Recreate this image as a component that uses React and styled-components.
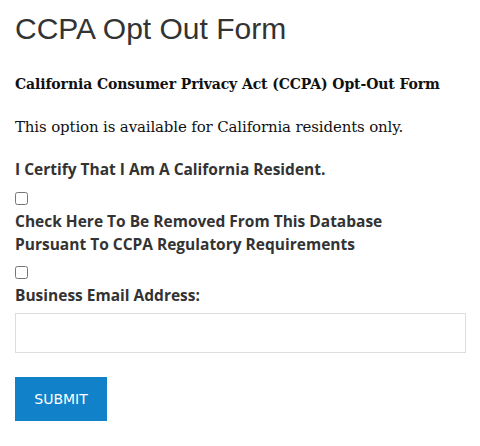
import React from "react";
import styled, { createGlobalStyle } from "styled-components";

const GlobalStyle = createGlobalStyle`
  html, body {
    margin: 0;
    padding: 0;
    background: #fff;
  }
`;

const Page = styled.div`
  padding: 11px 14px 20px 15px;
  display: flex;
  flex-direction: column;
  color: #222;
`;

const Title = styled.h1`
  margin: 0;
  font-family: "Liberation Sans", Arial, sans-serif;
  font-weight: 400;
  font-size: 30px;
  line-height: 36px;
  color: #333;
`;

const SubTitle = styled.h2`
  margin: 27px 0 0;
  font-family: "DejaVu Serif", "Liberation Serif", serif;
  font-weight: 700;
  font-size: 14px;
  line-height: 20px;
  color: #111;
  letter-spacing: -0.1px;
`;

const Note = styled.p`
  margin: 22px 0 0;
  font-family: "DejaVu Serif", "Liberation Serif", serif;
  font-size: 15px;
  line-height: 22px;
  color: #111;
  letter-spacing: -0.15px;
`;

const Label = styled.label`
  display: block;
  margin-top: ${(p) => p.$top || 0}px;
  font-family: "Open Sans", "Noto Sans", sans-serif;
  font-weight: 700;
  font-size: 15.5px;
  line-height: 23px;
  color: #333;
`;

const Check = styled.input.attrs({ type: "checkbox" })`
  margin: ${(p) => p.$top}px 0 ${(p) => p.$bottom}px;
  width: 13px;
  height: 13px;
`;

const EmailInput = styled.input.attrs({ type: "email" })`
  box-sizing: border-box;
  margin-top: 6px;
  width: 100%;
  height: 40px;
  border: 1px solid #ddd;
  background: #fff;
  outline: none;
`;

const SubmitButton = styled.button`
  margin-top: 24px;
  align-self: flex-start;
  width: 92px;
  height: 44px;
  border: none;
  background: #1181c9;
  color: #fff;
  font-family: "DejaVu Sans", Verdana, sans-serif;
  font-size: 14px;
  cursor: pointer;
`;

export default function App() {
  return (
    <>
      <GlobalStyle />
      <Page>
        <Title>CCPA Opt Out Form</Title>
        <SubTitle>California Consumer Privacy Act (CCPA) Opt-Out Form</SubTitle>
        <Note>This option is available for California residents only.</Note>
        <Label $top={20}>I Certify That I Am A California Resident.</Label>
        <Check $top={11} $bottom={5} />
        <Label>
          Check Here To Be Removed From This Database
          <br />
          Pursuant To CCPA Regulatory Requirements
        </Label>
        <Check $top={10} $bottom={5} />
        <Label>Business Email Address:</Label>
        <EmailInput />
        <SubmitButton>SUBMIT</SubmitButton>
      </Page>
    </>
  );
}
